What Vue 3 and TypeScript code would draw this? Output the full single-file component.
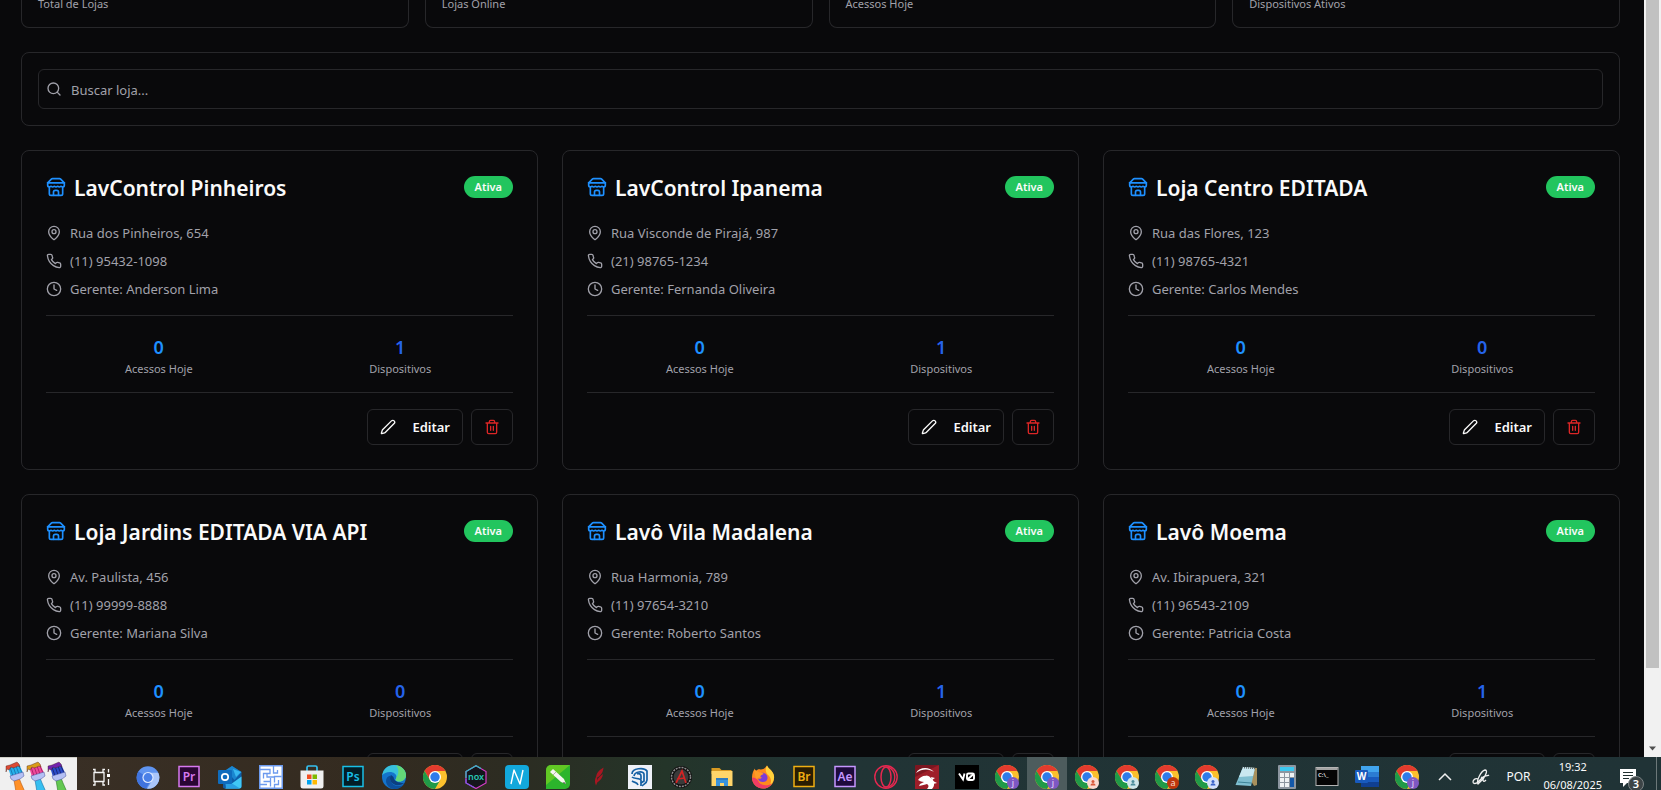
<script setup lang="ts">
import { ref } from 'vue'

interface Store {
  name: string
  address: string
  phone: string
  manager: string
  accesses: number
  devices: number
}

const totals = ['Total de Lojas', 'Lojas Online', 'Acessos Hoje', 'Dispositivos Ativos']
const query = ref('')

const stores: Store[] = [
  { name: 'LavControl Pinheiros', address: 'Rua dos Pinheiros, 654', phone: '(11) 95432-1098', manager: 'Anderson Lima', accesses: 0, devices: 1 },
  { name: 'LavControl Ipanema', address: 'Rua Visconde de Pirajá, 987', phone: '(21) 98765-1234', manager: 'Fernanda Oliveira', accesses: 0, devices: 1 },
  { name: 'Loja Centro EDITADA', address: 'Rua das Flores, 123', phone: '(11) 98765-4321', manager: 'Carlos Mendes', accesses: 0, devices: 0 },
  { name: 'Loja Jardins EDITADA VIA API', address: 'Av. Paulista, 456', phone: '(11) 99999-8888', manager: 'Mariana Silva', accesses: 0, devices: 0 },
  { name: 'Lavô Vila Madalena', address: 'Rua Harmonia, 789', phone: '(11) 97654-3210', manager: 'Roberto Santos', accesses: 0, devices: 1 },
  { name: 'Lavô Moema', address: 'Av. Ibirapuera, 321', phone: '(11) 96543-2109', manager: 'Patricia Costa', accesses: 0, devices: 1 },
]

interface App {
  kind: string
  letter?: string
  fill?: string
  ink?: string
  active?: boolean
}

const pinned: App[] = [
  { kind: 'taskview' },
  { kind: 'chromium' },
  { kind: 'adobe', letter: 'Pr', fill: '#2a0634', ink: '#d678f0' },
  { kind: 'outlook' },
  { kind: 'maze' },
  { kind: 'store' },
  { kind: 'adobe', letter: 'Ps', fill: '#021d26', ink: '#18bfe6' },
  { kind: 'edge' },
  { kind: 'chrome' },
  { kind: 'nox' },
  { kind: 'n' },
  { kind: 'corel' },
  { kind: 'feather' },
  { kind: 'sketchup' },
  { kind: 'emblem' },
  { kind: 'folder' },
  { kind: 'firefox' },
  { kind: 'adobe', letter: 'Br', fill: '#2a1d02', ink: '#f0ae12' },
  { kind: 'adobe', letter: 'Ae', fill: '#1e0a3c', ink: '#c596ff' },
  { kind: 'opera' },
  { kind: 'dragon' },
]

const running: App[] = [
  { kind: 'v0' },
  { kind: 'chrome', letter: 'j', fill: '#7e57c2', ink: '#e6dcf8' },
  { kind: 'chrome', letter: 'j', fill: '#7e57c2', ink: '#e6dcf8', active: true },
  { kind: 'chrome', fill: '#fbd9d0', ink: '#d9583a' },
  { kind: 'chrome', fill: '#cfe6ea', ink: '#4c8d9c' },
  { kind: 'chrome', letter: 'a', fill: '#bf360c', ink: '#f8d8cc' },
  { kind: 'chrome', fill: '#d3e0fb', ink: '#3a63c8' },
  { kind: 'notepad' },
  { kind: 'calculator' },
  { kind: 'console' },
  { kind: 'word' },
  { kind: 'chrome', letter: 'j', fill: '#7e57c2', ink: '#e6dcf8' },
]

const apps = [...pinned.map((a) => ({ ...a, wide: true })), ...running.map((a) => ({ ...a, wide: false }))]

const brushes = [
  { paint: '#dc4a34', bristle: '#27b0ea', dark: '#1470a8', handle: '#ff9127', edge: '#b85a10' },
  { paint: '#d99b18', bristle: '#ee4a9c', dark: '#a01c62', handle: '#36bff0', edge: '#1474a4' },
  { paint: '#7222ae', bristle: '#2a4cc8', dark: '#14206c', handle: '#62c850', edge: '#2c7c24' },
]
</script>

<template>
  <div class="desktop">
    <div class="viewport">
      <main class="content">
        <section class="totals">
          <div v-for="t in totals" :key="t" class="total">{{ t }}</div>
        </section>

        <section class="search-card">
          <label class="search">
            <svg class="icon" viewBox="0 0 24 24" aria-hidden="true"><circle cx="11" cy="11" r="8" /><path d="m21 21-4.3-4.3" /></svg>
            <input v-model="query" type="text" placeholder="Buscar loja..." aria-label="Buscar loja" />
          </label>
        </section>

        <section class="stores">
          <article v-for="s in stores" :key="s.name" class="card">
            <header class="card-head">
              <svg class="icon shop" viewBox="0 0 24 24" aria-hidden="true">
                <path d="m2 7 4.41-4.41A2 2 0 0 1 7.83 2h8.34a2 2 0 0 1 1.42.59L22 7" />
                <path d="M4 12v8a2 2 0 0 0 2 2h12a2 2 0 0 0 2-2v-8" />
                <path d="M15 22v-4a2 2 0 0 0-2-2h-2a2 2 0 0 0-2 2v4" />
                <path d="M2 7h20" />
                <path d="M22 7v3a2 2 0 0 1-2 2a2.7 2.7 0 0 1-1.59-.63.7.7 0 0 0-.82 0A2.7 2.7 0 0 1 16 12a2.7 2.7 0 0 1-1.59-.63.7.7 0 0 0-.82 0A2.7 2.7 0 0 1 12 12a2.7 2.7 0 0 1-1.59-.63.7.7 0 0 0-.82 0A2.7 2.7 0 0 1 8 12a2.7 2.7 0 0 1-1.59-.63.7.7 0 0 0-.82 0A2.7 2.7 0 0 1 4 12a2 2 0 0 1-2-2V7" />
              </svg>
              <h2>{{ s.name }}</h2>
              <span class="badge">Ativa</span>
            </header>

            <ul class="details">
              <li>
                <svg class="icon" viewBox="0 0 24 24" aria-hidden="true"><path d="M20 10c0 4.993-5.539 10.193-7.399 11.799a1 1 0 0 1-1.202 0C9.539 20.193 4 14.993 4 10a8 8 0 0 1 16 0" /><circle cx="12" cy="10" r="3" /></svg>
                {{ s.address }}
              </li>
              <li>
                <svg class="icon" viewBox="0 0 24 24" aria-hidden="true"><path d="M22 16.92v3a2 2 0 0 1-2.18 2 19.79 19.79 0 0 1-8.63-3.07 19.5 19.5 0 0 1-6-6 19.79 19.79 0 0 1-3.07-8.67A2 2 0 0 1 4.11 2h3a2 2 0 0 1 2 1.72 12.84 12.84 0 0 0 .7 2.81 2 2 0 0 1-.45 2.11L8.09 9.91a16 16 0 0 0 6 6l1.27-1.27a2 2 0 0 1 2.11-.45 12.84 12.84 0 0 0 2.81.7A2 2 0 0 1 22 16.92z" /></svg>
                {{ s.phone }}
              </li>
              <li>
                <svg class="icon" viewBox="0 0 24 24" aria-hidden="true"><circle cx="12" cy="12" r="10" /><path d="M12 6v6l4 2" /></svg>
                Gerente: {{ s.manager }}
              </li>
            </ul>

            <dl class="figures">
              <div><dd>{{ s.accesses }}</dd><dt>Acessos Hoje</dt></div>
              <div class="devices"><dd>{{ s.devices }}</dd><dt>Dispositivos</dt></div>
            </dl>

            <footer class="actions">
              <button type="button" class="edit">
                <svg class="icon" viewBox="0 0 24 24" aria-hidden="true"><path d="M21.174 6.812a1 1 0 0 0-3.986-3.987L3.842 16.174a2 2 0 0 0-.5.83l-1.321 4.352a.5.5 0 0 0 .623.622l4.353-1.32a2 2 0 0 0 .83-.497z" /></svg>
                Editar
              </button>
              <button type="button" class="remove" aria-label="Excluir">
                <svg class="icon" viewBox="0 0 24 24" aria-hidden="true"><path d="M3 6h18M19 6v14c0 1-1 2-2 2H7c-1 0-2-1-2-2V6M8 6V4c0-1 1-2 2-2h4c1 0 2 1 2 2v2M10 11v6M14 11v6" /></svg>
              </button>
            </footer>
          </article>
        </section>
      </main>

      <div class="scrollbar" aria-hidden="true">
        <div class="thumb"></div>
        <div class="rest"></div>
        <svg class="arrow" viewBox="0 0 17 17"><path d="M5 6.500h7l-3.500 4z" fill="#505050" /></svg>
      </div>
    </div>

    <footer class="taskbar">
      <div class="brushes">
        <svg viewBox="0 0 77 33" aria-hidden="true">
          <g v-for="(b, i) in brushes" :key="i" :transform="`translate(${i * 21} 0)`">
            <path d="M14 22l5-2 2 5 4 9h-9l-1-6z" :fill="b.handle" :stroke="b.edge" stroke-width=".6" />
            <path d="M8 9l11-3 4 9-12 4z" :fill="b.bristle" />
            <path d="M10 9l3 9M13 8l3 9M16 8l3 8M19 8l3 7" :stroke="b.dark" stroke-width=".8" fill="none" />
            <path d="M6 8l4-1 7-3 2 2 1 3-2-1-2 1-3 1-2-1-2 3-2-1-1 3z" :fill="b.paint" stroke="#4a2018" stroke-width=".4" />
            <path d="M10 18l13-4 1 4-4 3-6 2-3-2z" fill="#b4c0f4" stroke="#46509c" stroke-width=".5" />
          </g>
        </svg>
      </div>

      <nav class="apps" aria-label="Aplicativos">
        <button v-for="(a, i) in apps" :key="i" type="button" :class="[a.kind, { wide: a.wide, active: a.active }]" :aria-label="a.kind">
          <svg viewBox="0 0 24 24" aria-hidden="true">
            <g v-if="a.kind === 'taskview'" fill="none" stroke="#f4f4f4" stroke-width="1.300">
              <path d="M5 7.500h10v9H5zM4 4.500h2v3M16 4.500h-2v3M4 20h2v-3M16 20h-2v-3" /><path d="M19.500 4v3.500M19.500 14v6" /><path d="M18 9h3v3h-3z" fill="#fff" stroke="none" />
            </g>

            <g v-else-if="a.kind === 'chromium'">
              <circle cx="12" cy="12.500" r="11.300" fill="#5f94f0" />
              <path d="M12 12.500l-9.700-6A11.300 11.300 0 0 0 10 23.600l5-8z" fill="#3f73de" />
              <path d="M16.500 15L11 23.700A11.300 11.300 0 0 0 22.300 7.700H12z" fill="#a9c6fa" />
              <circle cx="12" cy="12.500" r="5.600" fill="#dce8ff" /><circle cx="12" cy="12.500" r="4.400" fill="#4a80e8" />
            </g>

            <g v-else-if="a.kind === 'adobe'">
              <rect x="2" y="1.500" width="20" height="20" :fill="a.fill" :stroke="a.ink" stroke-width="1.500" />
              <text x="12" y="15.500" text-anchor="middle" font-size="12" font-weight="600" :fill="a.ink">{{ a.letter }}</text>
            </g>

            <g v-else-if="a.kind === 'outlook'">
              <path d="M5 7l9-6 9.500 6v14a2 2 0 0 1-2 2.500h-14A2 2 0 0 1 5 21z" fill="#0f5ea8" />
              <path d="M8 5l6-4 9.500 6-7 8z" fill="#1a86d0" /><path d="M15 4l8 3-5 5z" fill="#38b8f0" />
              <path d="M7 23.500l16.500-12V21a2.500 2.500 0 0 1-2.500 2.500z" fill="#40c8f6" /><path d="M7 14l15 9.500H8z" fill="#28a0e4" />
              <rect x="0" y="5" width="14" height="14" rx="1" fill="#0f6cbd" /><circle cx="7" cy="12" r="3.200" fill="none" stroke="#fff" stroke-width="1.700" />
            </g>

            <g v-else-if="a.kind === 'maze'">
              <rect width="24" height="24" fill="#6c9aee" /><rect x="1.500" y="1.500" width="21" height="21" fill="#fff" />
              <path d="M1 4.500h10v4H4.500v5M8 8v4h7M14.500 1v7h4V5M22.500 11.500h-7v6M4.500 16.500h7v5M1 19.500h7M11.500 13v4M19.500 15v4.500h-4V23" fill="none" stroke="#6c9aee" stroke-width="1.300" />
            </g>

            <g v-else-if="a.kind === 'store'">
              <path d="M7 6V2.500A1.500 1.500 0 0 1 8.500 1h7A1.500 1.500 0 0 1 17 2.500V6" fill="none" stroke="#35c0f0" stroke-width="1.700" />
              <path d="M.5 5.500h23V21a2.500 2.500 0 0 1-2.500 2.500H3A2.500 2.500 0 0 1 .5 21z" fill="#f0f0f0" />
              <path d="M7 9.500h4.500V14H7z" fill="#f25022" /><path d="M12.500 9.500H17V14h-4.500z" fill="#7fba00" /><path d="M7 15h4.500v4.500H7z" fill="#00a4ef" /><path d="M12.500 15H17v4.500h-4.500z" fill="#ffb900" />
            </g>

            <g v-else-if="a.kind === 'edge'">
              <circle cx="12" cy="12" r="12" fill="#1474cc" />
              <path d="M.2 10.500C1 4 6 0 12 0c7 0 12 5 12 10 0 4-3 6.500-6.500 6.500-2.500 0-4-.9-4-1.800 0-.7 1-1.100 1-2.900 0-2.500-2.800-4.800-6.500-4.800C4.500 7 1.500 8.500.2 10.500z" fill="#38c0dc" />
              <path d="M14 .2C20 1.200 24 5.500 24 10c0 4-3 6.500-6.500 6.500-2.500 0-4-.9-4-1.800 0-.7 1-1.100 1-2.900C17 9 17 4 14 .2z" fill="#63d878" />
              <path d="M8.500 10.500C7 16 11 21 16 21c3 0 5-.8 6.500-2C20 22 16.500 24 12.500 24 7 24 4 19 4 16c0-3 2-5 4.500-5.500z" fill="#0c4f9c" />
              <path d="M9 10c-2.500 4 0 9.500 6 10.200 3.500.3 6-1.200 7.500-2.200l.3.500C20 17.500 12 18 11.500 12z" fill="#0b3f80" />
            </g>

            <g v-else-if="a.kind === 'chrome'">
              <circle cx="12" cy="12" r="12" fill="#fbc02d" />
              <path d="M1.600 6A12 12 0 0 1 22.400 6H12L7 15z" fill="#e33b2e" />
              <path d="M1.600 6A12 12 0 0 0 12 24l5.200-9L12 17.500 7 15z" fill="#209a48" />
              <circle cx="12" cy="12" r="6" fill="#fff" /><circle cx="12" cy="12" r="4.700" fill="#2f7bea" />
              <g v-if="a.fill">
                <circle cx="18" cy="18" r="6" :fill="a.fill" />
                <text v-if="a.letter" x="18" y="21" text-anchor="middle" font-size="9" :fill="a.ink">{{ a.letter }}</text>
                <g v-else :fill="a.ink"><circle cx="18" cy="16.500" r="1.500" /><path d="M15.500 20.500c0-3 5-3 5 0z" /></g>
              </g>
            </g>

            <g v-else-if="a.kind === 'nox'">
              <path d="M12 .8l10 5.700v11.500L12 23.500 2 18V6.500z" fill="#14151c" stroke="#d63cc8" stroke-width="1.200" />
              <path d="M2 13V6.500L12 .8l5 2.800" fill="none" stroke="#2cc0c4" stroke-width="1.200" /><path d="M2 14v4l8 4.500" fill="none" stroke="#7a58e8" stroke-width="1.200" />
              <text x="12" y="15" text-anchor="middle" font-size="9" font-weight="600" fill="#28c8b4">nox</text>
            </g>

            <g v-else-if="a.kind === 'n'">
              <rect width="24" height="24" rx="4" fill="#12a8dc" /><path d="M6 19L9 5l6 14 3-14" fill="none" stroke="#fff" stroke-width="1.400" stroke-linejoin="round" />
            </g>

            <g v-else-if="a.kind === 'corel'">
              <path d="M5 0h19v19a5 5 0 0 1-5 5H0V5a5 5 0 0 1 5-5z" fill="#2cb52c" /><path d="M5 0h19L0 20V5a5 5 0 0 1 5-5z" fill="#7ed321" opacity=".65" />
              <path d="M4 7l3-3 11 10 2 5-5-2z" fill="#f6f6f0" /><path d="M7 10l3-3" stroke="#b4b4a8" /><path d="M18 17l2 2-3-1z" fill="#333" />
            </g>

            <g v-else-if="a.kind === 'feather'" fill="#a81622">
              <path d="M16.500 2.500c-5 3-7.500 6-7.500 11 5-3 7-6 7.500-11z" /><path d="M16 9c-4 2.500-6 5-6.500 9 4-2.500 6-5 6.500-9z" /><path d="M9.500 11c-2 3-2 6-.5 9.500 1.500-3 2-6 .5-9.500z" />
            </g>

            <g v-else-if="a.kind === 'sketchup'">
              <rect width="24" height="24" fill="#eef1f8" />
              <g fill="none" stroke="#1460a4" stroke-width="1.700"><path d="M4 9c0-6 12-7 15-3v9c0 3-3 4-5 6" /><path d="M6 11c1-5 9-5 10-2v7l-3 2" /><path d="M4 12c2 2 8 1 9 3v6M4 16c3 2 5 1 6 4" /><path d="M9 9c2-1 4 0 4 2v3" /></g>
            </g>

            <g v-else-if="a.kind === 'emblem'">
              <circle cx="12" cy="12" r="11" fill="#111" /><circle cx="12" cy="12" r="9.500" fill="none" stroke="#8c8c8c" stroke-width="1.500" stroke-dasharray="2 1" /><circle cx="12" cy="12" r="7.500" fill="#3a3a3a" />
              <path d="M7 18l6-12 4 12M8 14l8-1" fill="none" stroke="#d42424" stroke-width="1.700" />
            </g>

            <g v-else-if="a.kind === 'folder'">
              <path d="M1.500 3h8l2 2h10v4h-20z" fill="#d99a22" /><path d="M1.500 6h21v15h-21z" fill="#ffd56a" /><path d="M6 21v-8h12v8h-4v-3h-4v3z" fill="#3a94dc" /><path d="M6 13h12v2H6z" fill="#2f7cc0" />
            </g>

            <g v-else-if="a.kind === 'firefox'">
              <path d="M16 .5c1 3 6 5 7 10.500C24 18 18.500 23.500 12 23.500S.8 18.500 1 12.500C1.100 8.500 2.500 5 4 3.500c0 1.500.5 2 1 2.500 1-1.500 3-2 4.500-1.500C12 4.500 14 3.500 16 .5z" fill="#ff8a1e" />
              <path d="M16 .5c1 3 6 5 7 10.500.5 4-2 8-4 9 2-4 1-8-3-11-1.500-2.500-2-5 0-8.500z" fill="#ffd23c" />
              <path d="M1 12.500C1 19 6 23.500 12 23.500c4 0 7-1.500 9-5-4 3-12 2.500-14-3-1-2-3-3-6-3z" fill="#f03c64" />
              <path d="M8 9c4-3 9 0 8.500 4.500C16 18 8 18.500 7 13.500c1 .5 3 .5 4-1C9 12 7 11 8 9z" fill="#7c3cd8" /><path d="M3 5c2 0 4 1.500 5.500 2.500 2 0 4 .5 4 1.500-1 1-3 1-3 2.500 0 1-4 1-4.500 3z" fill="#ff9d26" />
            </g>

            <g v-else-if="a.kind === 'opera'" fill="none" stroke="#e62850">
              <circle cx="12" cy="12" r="11.200" stroke-width="1.400" /><ellipse cx="12" cy="12" rx="5" ry="10" stroke-width="1.500" /><path d="M14 1.800c9 4 9 16.500 0 20.500" stroke-width="1.300" />
            </g>

            <g v-else-if="a.kind === 'dragon'">
              <rect width="24" height="24" rx="1" fill="#7c1620" /><path d="M0 12L24 0v24H0z" fill="#b52430" opacity=".6" />
              <path d="M1 8c3-6 13-7 18-1-5-3.500-12-3.500-18 1z" fill="#fff" /><path d="M3 15c3-4 8-6 13-2 4 3 4 8 1 11h-5c2-2 2-4 0-5-2 1-5 1-8 2l1-2 4-2-3-.5z" fill="#fff" /><path d="M11 10l4 2-1 2zM16 12l4 1-3 2zM18 16l4 2-4 1z" fill="#fff" />
            </g>

            <g v-else-if="a.kind === 'v0'">
              <rect width="24" height="24" fill="#000" /><g fill="none" stroke="#fff" stroke-width="1.900"><path d="M4 8.500l4 6 1.500-6" /><rect x="12" y="8.500" width="7" height="6.500" rx="1.500" /><path d="M12.500 14.500l6-5.500" /></g>
            </g>

            <g v-else-if="a.kind === 'notepad'">
              <path d="M8 2l14 1v17l-3 1z" fill="#a8905c" /><path d="M8 2l12 1-4 18L.5 20z" fill="#7fbfd0" /><path d="M8 2l12 1-2 8L4 12z" fill="#c9e8f0" /><path d="M7 2.500l13 1" stroke="#5c6468" stroke-width="1.500" stroke-dasharray="1 1" /><path d="M3 17l13 1" stroke="#3c8498" />
            </g>

            <g v-else-if="a.kind === 'calculator'">
              <rect x="3" width="18" height="24" rx="1" fill="#8c96a0" /><rect x="5" y="2" width="14" height="4" fill="#3cc8f0" />
              <g fill="#eef2f4"><path d="M5 8h4v4H5zM10 8h4v4h-4zM15 8h4v4h-4zM5 13h4v4H5zM10 13h4v4h-4zM5 18h4v4H5zM10 18h4v4h-4z" /></g><path d="M15 13h4v9h-4z" fill="#1458a8" />
            </g>

            <g v-else-if="a.kind === 'console'">
              <rect x="1" y="2.500" width="22" height="18" fill="#050505" stroke="#b4b4b4" stroke-width="1" /><path d="M1.500 4h21" stroke="#d8d8d8" stroke-width="1.500" />
              <text x="3" y="12" font-size="6" font-weight="600" fill="#e8e8e8">C:\_</text>
            </g>

            <g v-else-if="a.kind === 'word'">
              <path d="M6 1h18v6H6z" fill="#41a5ee" /><path d="M6 7h18v5H6z" fill="#2b7cd3" /><path d="M6 12h18v5H6z" fill="#185abd" /><path d="M6 17h18v5H6z" fill="#103f91" />
              <rect y="5" width="13" height="13" rx="1" fill="#185abd" /><text x="6.500" y="15" text-anchor="middle" font-size="10" font-weight="700" fill="#fff">W</text>
            </g>
          </svg>
        </button>
      </nav>

      <div class="tray">
        <svg class="tray-icon" viewBox="0 0 24 24" aria-hidden="true"><path d="M6 15l6-6 6 6" fill="none" stroke="#f0f0f0" stroke-width="1.500" /></svg>
        <svg class="tray-icon" viewBox="0 0 24 24" aria-hidden="true">
          <path d="M9 19C7 16 12 6 16 5c3 0 1 5-2 9l-4 4zM12 12l3 2M9 14c-3-1-5 1-5 3s3 2 5 0l5-5c3-2 5-1 6-2M14 14c0 3 1 3 3 1" fill="none" stroke="#f0f0f0" stroke-width="1.300" />
        </svg>
        <span class="lang">POR</span>
        <time class="clock" datetime="2025-08-06T19:32">19:32<br />06/08/2025</time>
        <svg class="notice" viewBox="0 0 30 33" aria-hidden="true">
          <path d="M6 12h16v14h-9l-4 4v-4H6z" fill="#fff" /><path d="M9 15.500h10M9 18.500h10M9 21.500h6" stroke="#20302f" />
          <circle cx="22" cy="27" r="7.500" fill="#3c4446" stroke="#7c8486" stroke-width="1" /><text x="22" y="31" text-anchor="middle" font-size="11" font-weight="600" fill="#fff">3</text>
        </svg>
        <span class="peek"></span>
      </div>
    </footer>
  </div>
</template>

<style>
html,
body {
  background: #09090b;
}
</style>

<style scoped>
* {
  box-sizing: border-box;
}

.desktop {
  display: grid;
  grid-template-rows: minmax(0, 1fr) 33px;
  height: 100vh;
  overflow: hidden;
  background: #09090b;
  color: #fafafa;
  font-family: "Noto Sans", "Open Sans", sans-serif;
  font-size: 13px;
}

button,
input {
  font: inherit;
  color: inherit;
}

.viewport {
  display: flex;
  min-height: 0;
}

.content {
  flex: 1;
  min-width: 0;
  overflow: hidden;
  display: flex;
  flex-direction: column;
  gap: 24px;
  padding: 0 24px 0 21px;
}

.content > * {
  flex-shrink: 0;
}

.icon {
  width: 16px;
  height: 16px;
  flex-shrink: 0;
  fill: none;
  stroke: currentColor;
  stroke-width: 2;
  stroke-linecap: round;
  stroke-linejoin: round;
}

.totals {
  display: grid;
  grid-template-columns: repeat(4, 1fr);
  gap: 16px;
  margin-top: -4px;
}

.total {
  padding: 0 16px 15px;
  border: 1px solid #27272a;
  border-top: 0;
  border-radius: 0 0 8px 8px;
  color: #a1a1aa;
  font-size: 11px;
  line-height: 16px;
}

.search-card {
  padding: 16px;
  border: 1px solid #27272a;
  border-radius: 8px;
}

.search {
  display: flex;
  align-items: center;
  gap: 9px;
  height: 40px;
  padding: 0 7px;
  border: 1px solid #27272a;
  border-radius: 6px;
  color: #a1a1aa;
}

.search input {
  flex: 1;
  min-width: 0;
  padding: 2px 0 0;
  border: 0;
  outline: 0;
  background: transparent;
  line-height: 20px;
}

.search input::placeholder {
  color: #a1a1aa;
  opacity: 1;
}

.stores {
  display: grid;
  grid-template-columns: repeat(3, 1fr);
  gap: 24px;
}

.card {
  padding: 24px;
  border: 1px solid #27272a;
  border-radius: 8px;
}

.card-head {
  display: flex;
  align-items: center;
  gap: 8px;
  height: 24px;
  margin-bottom: 24px;
}

.shop {
  width: 20px;
  height: 20px;
  color: #1e90ff;
}

h2 {
  flex: 1;
  margin: 0;
  padding-top: 2px;
  font-size: 21px;
  font-weight: 600;
  line-height: 26px;
  white-space: nowrap;
}

.badge {
  padding: 0 11px;
  border-radius: 11px;
  background: #22c55e;
  font-size: 11px;
  font-weight: 600;
  line-height: 22px;
}

.details {
  display: flex;
  flex-direction: column;
  gap: 8px;
  margin: 0 0 16px;
  padding: 0;
  list-style: none;
  color: #a1a1aa;
}

.details li {
  display: flex;
  align-items: center;
  gap: 8px;
  line-height: 20px;
}

.figures {
  display: grid;
  grid-template-columns: 1fr 1fr;
  gap: 16px;
  margin: 0;
  padding: 17px 0 15px;
  border: 1px solid #27272a;
  border-width: 1px 0;
  text-align: center;
}

.figures div {
  display: flex;
  flex-direction: column;
}

.figures dd {
  margin: 0;
  color: #1e90ff;
  font-size: 18px;
  font-weight: 600;
  line-height: 28px;
}

.figures .devices dd {
  color: #2563eb;
}

.figures dt {
  color: #a1a1aa;
  font-size: 11px;
  line-height: 16px;
}

.actions {
  display: flex;
  justify-content: flex-end;
  gap: 8px;
  margin-top: 16px;
}

.actions button {
  display: flex;
  align-items: center;
  gap: 16px;
  height: 36px;
  padding: 0 12px;
  border: 1px solid #27272a;
  border-radius: 6px;
  background: transparent;
  font-weight: 600;
}

.actions .remove {
  color: #dc2626;
}

.scrollbar {
  display: flex;
  flex-direction: column;
  width: 17px;
  padding: 0 2px;
  background: #f1f1f1;
}

.thumb {
  flex: 167;
  background: #c1c1c1;
}

.rest {
  flex: 18;
}

.arrow {
  width: 17px;
  height: 17px;
  margin-left: -2px;
}

.taskbar {
  position: relative;
  display: flex;
  min-width: 0;
  overflow: hidden;
  background: linear-gradient(90deg, #3a3026 0, #342b20 22%, #2c2c22 31%, #243529 40%, #213435 49%, #203336 100%);
}

.brushes {
  width: 77px;
  flex-shrink: 0;
  border-top: 1px solid #cfcfc8;
  background: #f0f0f0;
}

.brushes svg {
  display: block;
  width: 77px;
  height: 33px;
}

.apps {
  display: flex;
}

.apps button {
  display: flex;
  justify-content: center;
  width: 40px;
  height: 40px;
  padding: 8px 0 0;
  border: 0;
  background: transparent;
}

.apps button.wide {
  width: 41px;
}

.apps button.taskview {
  width: 48px;
  margin-right: 2px;
}

.apps button.active {
  background: #4d5c5d;
}

.apps svg {
  width: 24px;
  height: 24px;
}

.tray {
  display: flex;
  gap: 12px;
  margin-left: auto;
  padding-right: 4px;
  font-size: 11px;
}

.tray-icon {
  width: 24px;
  height: 24px;
  margin-top: 8px;
}

.lang {
  width: 26px;
  text-align: center;
  font-size: 12px;
  line-height: 40px;
}

.clock {
  padding-top: 1px;
  text-align: center;
  line-height: 18px;
}

.notice {
  width: 30px;
  height: 33px;
}

.peek {
  width: 1px;
  background: #6c7879;
}
</style>
